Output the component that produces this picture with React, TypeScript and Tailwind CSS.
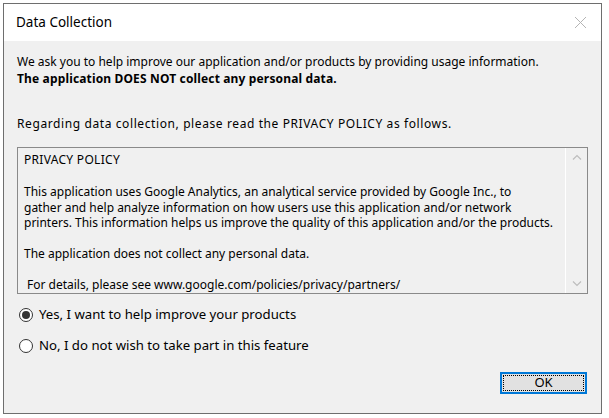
import React, { useState } from "react";

const font = { fontFamily: '"Noto Sans", "Open Sans", sans-serif' };

function Radio({ checked, label, onClick }: { checked: boolean; label: string; onClick: () => void }) {
  return (
    <button onClick={onClick} className="flex items-center gap-[6px] h-[20px] text-left">
      <span className="w-[14px] h-[14px] rounded-full border border-[#333333] bg-white flex items-center justify-center">
        {checked && <span className="w-[8px] h-[8px] rounded-full bg-[#333333]" />}
      </span>
      <span className="text-[13.2px] text-black leading-none">{label}</span>
    </button>
  );
}

export default function App() {
  const [agree, setAgree] = useState(true);

  return (
    <div className="w-[609px] h-[418px] bg-white pt-[3px] pl-[3px]" style={font}>
      <div className="w-[599px] h-[411px] border border-[#6e6e6e] bg-[#f0f0f0] flex flex-col">
        {/* title bar */}
        <div className="h-[37px] bg-white flex items-center justify-between pl-[12px] pr-[14px]">
          <span className="text-[13.5px] text-black">Data Collection</span>
          <svg width="13" height="13" viewBox="0 0 13 13" className="text-[#b4b4b4]">
            <path d="M1 1L12 12M12 1L1 12" stroke="currentColor" strokeWidth="1" />
          </svg>
        </div>

        <div className="flex flex-col px-[13px] pt-[12px] text-[12px] text-black">
          <p className="leading-[17px]">
            We ask you to help improve our application and/or products by providing usage information.
          </p>
          <p className="leading-[17px] font-bold tracking-[0.15px]">The application DOES NOT collect any personal data.</p>
          <p className="leading-[17px] mt-[28px] tracking-[0.6px]">
            Regarding data collection, please read the PRIVACY POLICY as follows.
          </p>

          {/* policy box */}
          <div className="mt-[15px] w-[571px] h-[147px] border border-[#8a8a8a] flex">
            <div className="flex-1 pl-[6px] pt-[4px] text-[12px] leading-[15.5px] text-black">
              <p className="tracking-[0.3px]">PRIVACY POLICY</p>
              <p className="mt-[16.5px]">
                This application uses Google Analytics, an analytical service provided by Google Inc., to
                <br />
                gather and help analyze information on how users use this application and/or network
                <br />
                printers. This information helps us improve the quality of this application and/or the products.
              </p>
              <p className="mt-[15.5px]">The application does not collect any personal data.</p>
              <p className="mt-[15.5px] pl-[3px]">For details, please see www.google.com/policies/privacy/partners/</p>
            </div>
            <div className="w-[22px] border-l border-white flex flex-col items-center justify-between py-[6px]">
              <svg width="10" height="6" viewBox="0 0 10 6">
                <path d="M1 5.5L5 1.5L9 5.5" fill="none" stroke="#bdbdbd" strokeWidth="1.2" />
              </svg>
              <svg width="10" height="6" viewBox="0 0 10 6">
                <path d="M1 0.5L5 4.5L9 0.5" fill="none" stroke="#bdbdbd" strokeWidth="1.2" />
              </svg>
            </div>
          </div>

          <div className="mt-[11px] flex flex-col gap-[11px] pl-[2px]">
            <Radio checked={agree} label="Yes, I want to help improve your products" onClick={() => setAgree(true)} />
            <Radio checked={!agree} label="No, I do not wish to take part in this feature" onClick={() => setAgree(false)} />
          </div>

          <div className="flex justify-end mt-[16px] pr-[1px]">
            <button className="w-[87px] h-[22px] border-2 border-[#0078d7] bg-[#e1e1e1] p-[1px]">
              <span className="flex items-center justify-center w-full h-full border border-dotted border-black text-[13px] text-black">
                OK
              </span>
            </button>
          </div>
        </div>
      </div>
    </div>
  );
}
